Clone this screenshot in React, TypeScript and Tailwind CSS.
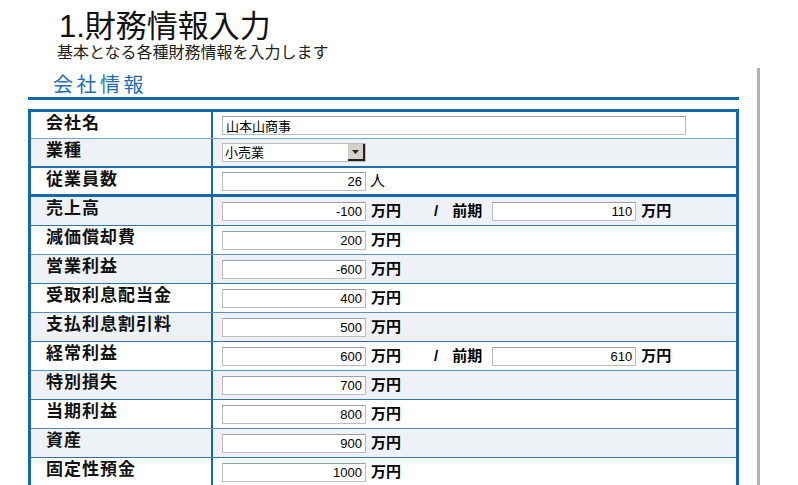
import React from 'react';

type Row = {
  label: string;
  value: string;
  prev?: string;
};

const money: Row[] = [
  { label: '売上高', value: '-100', prev: '110' },
  { label: '減価償却費', value: '200' },
  { label: '営業利益', value: '-600' },
  { label: '受取利息配当金', value: '400' },
  { label: '支払利息割引料', value: '500' },
  { label: '経常利益', value: '600', prev: '610' },
  { label: '特別損失', value: '700' },
  { label: '当期利益', value: '800' },
  { label: '資産', value: '900' },
  { label: '固定性預金', value: '1000' },
];

function Box({ value, width = 'w-[144px]', left }: { value: string; width?: string; left?: boolean }) {
  return (
    <input
      readOnly
      value={value}
      className={`${width} h-[19px] border border-[#b9bcc0] border-t-[#9a9fa5] bg-white px-[3px] text-[13px] leading-[17px] text-black outline-none ${
        left ? 'text-left' : 'text-right'
      }`}
    />
  );
}

function Label({ text }: { text: string }) {
  return (
    <div className="flex w-[182px] shrink-0 items-start border-r-2 border-[#1468b0] pl-[15px] pt-[1px] text-[17px] leading-[22px] font-bold tracking-[1px] text-[#111]">
      {text}
    </div>
  );
}

export default function App() {
  return (
    <div className="h-[485px] w-[798px] overflow-hidden bg-white font-['Liberation_Sans','Noto_Sans_CJK_JP',sans-serif] text-black">
      <div className="pl-[59px] pt-[10px]">
        <h1 className="text-[31px] leading-[34px] text-[#111]">1.財務情報入力</h1>
        <p className="-ml-[2px] text-[16px] leading-[17px] text-[#222]">基本となる各種財務情報を入力します</p>
      </div>

      <div className="mt-[7px] w-[760px] border-r-[3px] border-[#b4b4b4] pr-[18px] pl-[28px]">
        <h2 className="pt-[5px] pl-[25px] text-[20px] leading-[24px] tracking-[3.5px] text-[#1f6fb4]">会社情報</h2>
        <div className="h-[3px] bg-[#1468b0]" />

        <div className="mt-[9px] border-[3px] border-b-0 border-[#1468b0]">
          <div className="flex h-[27px] border-b border-[#7ea6cc] bg-white">
            <Label text="会社名" />
            <div className="flex items-center pl-[9px]">
              <Box value="山本山商事" width="w-[464px]" left />
            </div>
          </div>

          <div className="flex h-[29px] border-b-2 border-[#1f6fb0] bg-[#eef2f7]">
            <Label text="業種" />
            <div className="flex items-center pl-[9px]">
              <div className="flex h-[19px] w-[144px] items-center justify-between border border-[#b9bcc0] bg-white pl-[2px]">
                <span className="text-[13px] leading-[17px]">小売業</span>
                <span className="flex h-[17px] w-[17px] items-center justify-center border-r-2 border-b-2 border-[#222] bg-[#d4d0c8]">
                  <svg width="7" height="4" viewBox="0 0 7 4">
                    <path d="M0 0h7L3.5 4z" fill="#222" />
                  </svg>
                </span>
              </div>
            </div>
          </div>

          <div className="flex h-[29px] border-b-[3px] border-[#1468b0] bg-white">
            <Label text="従業員数" />
            <div className="flex items-center pl-[9px]">
              <Box value="26" />
              <span className="ml-[4px] text-[15px] leading-[18px]">人</span>
            </div>
          </div>

          {money.map((r, i) => (
            <div
              key={r.label}
              className={`flex h-[29px] border-b ${i % 2 === 0 ? 'bg-[#eef2f7] border-[#2f74b2]' : 'bg-white border-[#5a90c2]'}`}
            >
              <Label text={r.label} />
              <div className="flex items-center pl-[9px]">
                <Box value={r.value} />
                <span className="ml-[5px] text-[15px] leading-[18px] font-bold">万円</span>
                {r.prev && (
                  <>
                    <span className="ml-[33px] text-[15px] leading-[18px] font-bold">/</span>
                    <span className="ml-[14px] text-[15px] leading-[18px] font-bold">前期</span>
                    <span className="ml-[10px]">
                      <Box value={r.prev} />
                    </span>
                    <span className="ml-[5px] text-[15px] leading-[18px] font-bold">万円</span>
                  </>
                )}
              </div>
            </div>
          ))}
        </div>
      </div>
    </div>
  );
}
